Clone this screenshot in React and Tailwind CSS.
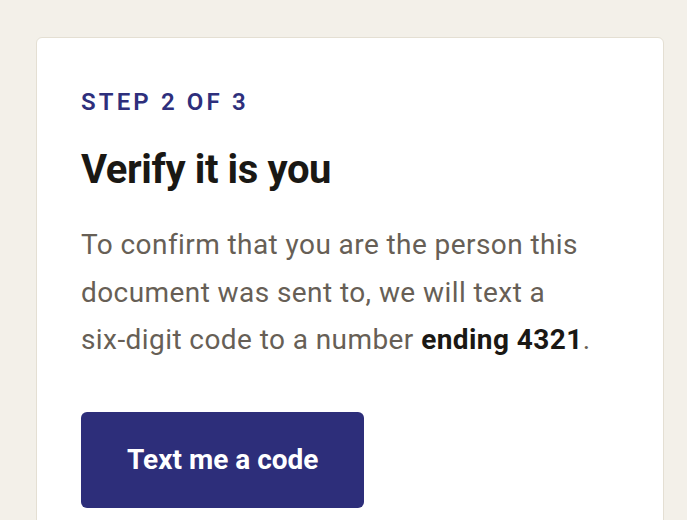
import React from 'react';

const App = () => {
    return (
        <div className="min-h-screen bg-white font-['Roboto','Liberation_Sans',sans-serif]">
            <div className="w-[687px] min-h-screen bg-[#f3f0e9] pl-[36px] pt-[37px] pb-10">
                <div className="w-[628px] bg-white border border-[#e4dfd3] rounded-md px-[44px] pt-[46px] pb-12">
                    <p className="text-[24px] leading-[36px] font-semibold tracking-[0.13em] text-[#2e2f7c] uppercase">
                        Step 2 of 3
                    </p>
                    <h1 className="mt-[26px] text-[40px] leading-[48px] font-bold text-[#1a1814] tracking-[-0.01em]">
                        Verify it is you
                    </h1>
                    <p className="mt-[27px] text-[28px] leading-[47.5px] tracking-[0.015em] text-[#675f56] max-w-[540px]">
                        To confirm that you are the person this document was sent to, we will text a <span className="whitespace-nowrap">six-digit</span> code to a number <strong className="font-bold text-[#1a1814]">ending 4321</strong>.
                    </p>
                    <button className="mt-[48px] h-[96px] px-[46px] bg-[#2d2e7a] text-white text-[28px] font-bold rounded-md">
                        Text me a code
                    </button>
                </div>
            </div>
        </div>
    );
};

export default App;
